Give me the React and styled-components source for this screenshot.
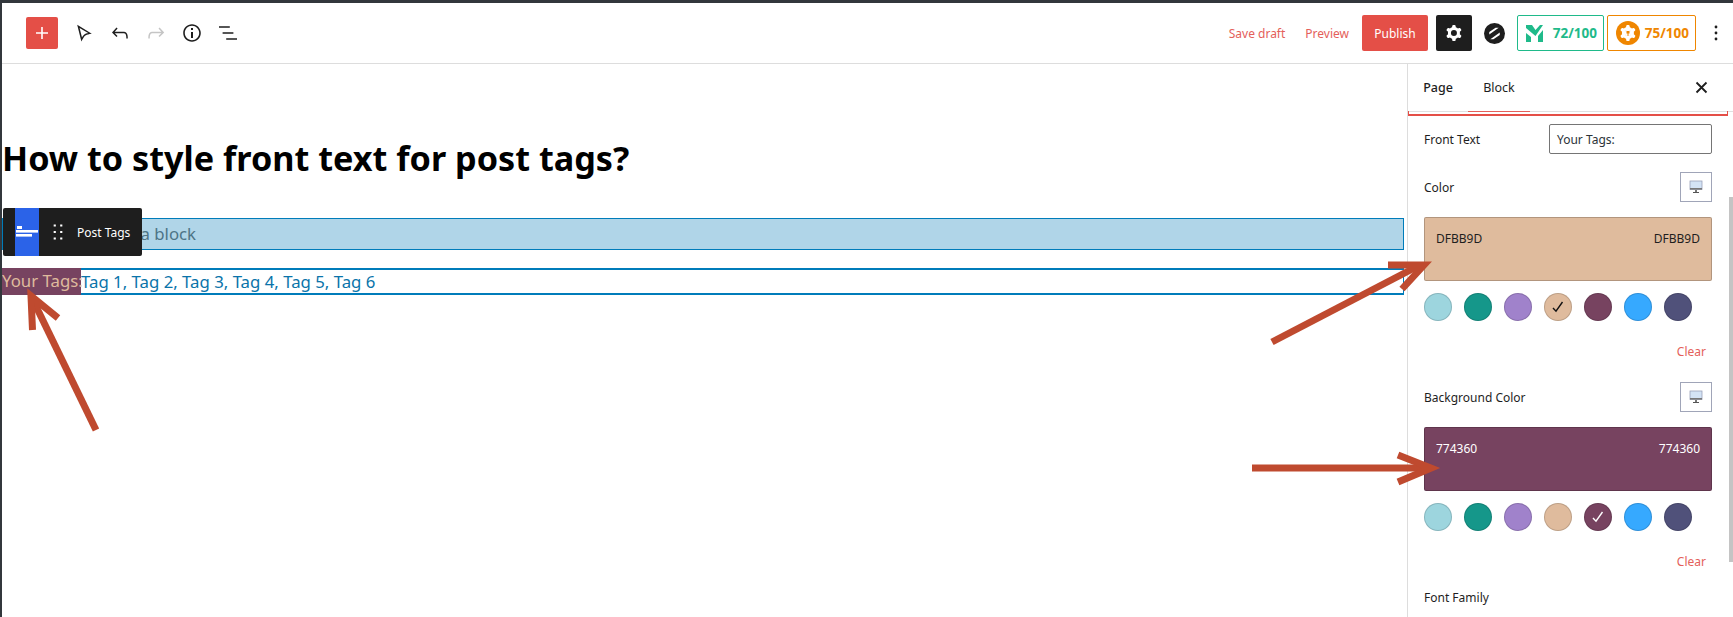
import React from "react";
import styled, { createGlobalStyle } from "styled-components";

const Global = createGlobalStyle`
  html, body { margin: 0; padding: 0; height: 617px; overflow: hidden; background: #fff; }
  * { box-sizing: border-box; }
  body { font-family: "Noto Sans", "Open Sans", sans-serif; color: #1e1e1e; }
`;

const Page = styled.div`
  position: relative;
  width: 1733px;
  height: 617px;
  border-top: 3px solid #32373c;
  border-left: 2px solid #32373c;
  overflow: hidden;
  display: flex;
  flex-direction: column;
`;
const Header = styled.header`
  flex: 0 0 61px;
  display: flex;
  align-items: center;
  padding: 0 0 0 24px;
  border-bottom: 1px solid #ddd;
`;
const AddButton = styled.button`
  width: 32px;
  height: 32px;
  padding: 0;
  border: 0;
  border-radius: 2px;
  background: #e44f47;
  color: #fff;
  display: flex;
  align-items: center;
  justify-content: center;
`;
const ToolGroup = styled.div`
  display: flex;
  align-items: center;
  gap: 12px;
  margin-left: 14px;
`;
const Icon = styled.svg`
  width: ${(p) => p.$size || 24}px;
  height: ${(p) => p.$size || 24}px;
  fill: ${(p) => p.$color || "currentColor"};
  flex: none;
  display: block;
`;
const HeaderRight = styled.div`
  margin-left: auto;
  display: flex;
  align-items: center;
`;
const LinkText = styled.span`
  font-size: 12px;
  color: #e4605a;
  margin-right: ${(p) => p.$gap}px;
`;
const Publish = styled.button`
  width: 66px;
  height: 36px;
  border: 0;
  border-radius: 2px;
  background: #e44f47;
  color: #fff;
  font: 12px "Noto Sans", sans-serif;
  padding: 0;
`;
const GearButton = styled.div`
  width: 36px;
  height: 36px;
  margin-left: 8px;
  border-radius: 2px;
  background: #1e1e1e;
  display: flex;
  align-items: center;
  justify-content: center;
  color: #fff;
`;
const LogoMark = styled.svg`
  width: 21px;
  height: 21px;
  margin: 0 12px 0 12px;
  display: block;
`;
const Score = styled.div`
  height: 36px;
  width: ${(p) => p.$w}px;
  margin-right: 3px;
  border: 1px solid ${(p) => p.$color};
  border-radius: 2px;
  color: ${(p) => p.$color};
  display: flex;
  align-items: center;
  justify-content: space-between;
  padding: 0 6px 0 8px;
  font-size: 13.5px;
  font-weight: 700;
`;
const Kebab = styled.div`
  width: 34px;
  display: flex;
  justify-content: center;
  color: #1e1e1e;
`;
const Main = styled.div`
  flex: 1;
  display: flex;
  min-height: 0;
`;
const Canvas = styled.main`
  flex: 1;
  min-width: 0;
  padding: 71px 3px 0 0;
`;
const Title = styled.h1`
  margin: 0;
  font-size: 34.2px;
  line-height: 46px;
  font-weight: 700;
  color: #000;
`;
const Placeholder = styled.div`
  margin-top: 37px;
  height: 32px;
  background: #b0d5e8;
  border: 1px solid #007cba;
  font-size: 16.8px;
  line-height: 29px;
  color: #4d7486;
  padding-left: 4px;
`;
const TagsBlock = styled.div`
  margin-top: 18px;
  height: 27px;
  border-top: 2px solid #007cba;
  border-bottom: 2px solid #007cba;
  border-right: 1px solid #007cba;
  display: flex;
  align-items: center;
  font-size: 16.8px;
  color: #0a74aa;
  white-space: nowrap;
`;
const FrontText = styled.span`
  background: #774360;
  color: #dfbb9d;
  height: 27px;
  margin: -2px 0;
  width: 79px;
  line-height: 25px;
  flex: none;
`;
const BlockToolbar = styled.div`
  position: absolute;
  left: 1px;
  top: 205px;
  width: 139px;
  height: 48px;
  background: #1e1e1e;
  border-radius: 2px;
  display: flex;
  align-items: center;
  color: #fff;
  padding-left: 12px;
`;
const BlockIcon = styled.div`
  width: 24px;
  height: 48px;
  background: #2b63e8;
  display: flex;
  align-items: center;
  justify-content: center;
`;
const Handle = styled.div`
  width: 38px;
  display: flex;
  justify-content: center;
`;
const BlockName = styled.span`
  font-size: 12px;
`;
const EdgeMark = styled.div`
  position: absolute;
  left: -2px;
  top: ${(p) => p.$top}px;
  width: 2px;
  height: ${(p) => p.$h}px;
  background: ${(p) => p.$color};
`;
const Sidebar = styled.aside`
  position: relative;
  width: 326px;
  flex: none;
  border-left: 1px solid #ddd;
  overflow: hidden;
`;
const Tabs = styled.div`
  height: 48px;
  display: flex;
  align-items: center;
  border-bottom: 1px solid #e0e0e0;
`;
const Tab = styled.div`
  height: 48px;
  width: ${(p) => p.$w}px;
  display: flex;
  align-items: center;
  justify-content: center;
  font-size: 12.5px;
  font-weight: ${(p) => (p.$active ? 500 : 400)};
  color: #1e1e1e;
  box-shadow: ${(p) => (p.$line ? "inset 0 -1px 0 #e4605a" : "none")};
`;
const CloseBox = styled.div`
  margin-left: auto;
  margin-right: 25px;
  display: flex;
`;
const RedRule = styled.div`
  height: 5px;
  margin-top: -1px;
  width: 320px;
  border: 2px solid #e44f47;
  border-top: 0;
  border-left-width: 1px;
  border-right-width: 1px;
`;
const Panel = styled.div`
  padding: 8px 21px 0 16px;
`;
const InputRow = styled.div`
  display: flex;
  align-items: center;
  justify-content: space-between;
  height: 30px;
`;
const Label = styled.span`
  font-size: 12px;
  color: #1e1e1e;
`;
const TextBox = styled.div`
  width: 163px;
  height: 30px;
  border: 1px solid #757575;
  border-radius: 2px;
  padding-left: 7px;
  font-size: 12px;
  line-height: 29px;
  color: #2c3338;
`;
const ColorHead = styled.div`
  display: flex;
  align-items: center;
  justify-content: space-between;
  height: 30px;
  margin-top: ${(p) => p.$mt}px;
`;
const DeviceButton = styled.div`
  width: 32px;
  height: 30px;
  border: 1px solid #a0a5b8;
  display: flex;
  align-items: center;
  justify-content: center;
`;
const Swatch = styled.div`
  margin-top: 15px;
  height: 64px;
  border-radius: 2px;
  background: ${(p) => p.$bg};
  border: 1px solid rgba(0, 0, 0, 0.2);
  color: ${(p) => p.$fg};
  font-size: 12px;
  display: flex;
  justify-content: space-between;
  padding: 12px 11px 0;
`;
const Circles = styled.div`
  display: flex;
  gap: 12px;
  margin-top: 12px;
`;
const Circle = styled.div`
  width: 28px;
  height: 28px;
  border-radius: 50%;
  background: ${(p) => p.$bg};
  border: 1px solid rgba(0, 0, 0, 0.15);
  display: flex;
  align-items: center;
  justify-content: center;
  color: ${(p) => p.$check};
`;
const ClearRow = styled.div`
  display: flex;
  justify-content: flex-end;
  padding-right: 6px;
  margin-top: 21px;
  height: 20px;
  line-height: 20px;
  font-size: 12px;
  color: #e4605a;
`;
const Foot = styled.div`
  margin-top: 14px;
  height: 20px;
  line-height: 20px;
`;
const ScrollThumb = styled.div`
  position: absolute;
  right: 0;
  top: 133px;
  width: 4px;
  height: 365px;
  background: #c4c4c4;
`;
const Overlay = styled.svg`
  position: absolute;
  left: -2px;
  top: -3px;
  width: 1733px;
  height: 617px;
  pointer-events: none;
`;

const P = {
  plus: "M18 11.2h-5.2V6h-1.6v5.2H6v1.6h5.2V18h1.6v-5.2H18z",
  pointer: "M9.4 20.5L5.2 3.8l14.6 9-2 .3c-.2 0-.4.1-.7.1-.9.2-1.6.3-2.2.5-.8.3-1.4.5-1.8 1-.4.3-.8.8-1.3 1.5-.4.5-.8 1.2-1.2 2l-.3.6-.9 1.7zM7.6 7.1l2.4 9.3c.2-.4.5-.8.7-1.1.6-.8 1.1-1.4 1.6-1.8.7-.6 1.5-1 2.5-1.3.4-.1.8-.2 1.3-.3l-8.5-4.8z",
  undo: "M18.3 11.7c-.6-.6-1.4-.9-2.3-.9H6.7l2.9-3.3-1.1-1-4.5 5L8.5 16l1-1-2.7-2.7H16c.5 0 .9.2 1.3.5 1 1 1 3.4 1 4.5v.3h1.5v-.2c0-1.5 0-4.3-1.5-5.7z",
  redo: "M15.6 6.5l-1.1 1 2.9 3.3H8c-.9 0-1.7.3-2.3.9-1.4 1.5-1.4 4.2-1.4 5.6v.2h1.5v-.3c0-1.1 0-3.5 1-4.5.3-.3.7-.5 1.3-.5h9.2L14.5 15l1.1 1.1 4.6-4.6-4.6-5z",
  info: "M12 3.2c-4.8 0-8.8 3.9-8.8 8.8 0 4.8 3.9 8.8 8.8 8.8 4.8 0 8.8-3.9 8.8-8.8 0-4.8-4-8.8-8.8-8.8zm0 16c-4 0-7.2-3.3-7.2-7.2C4.8 8 8 4.8 12 4.8s7.2 3.3 7.2 7.2c0 4-3.2 7.2-7.2 7.2zM11 17h2v-6h-2v6zm0-8h2V7h-2v2z",
  list: "M13.8 5.2H3v1.5h10.8V5.2zm-3.6 12v1.5H21v-1.5H10.2zm7.2-6H6.6v1.5h10.8v-1.5z",
  drag: "M8 7h2V5H8v2zm0 6h2v-2H8v2zm0 6h2v-2H8v2zm6-14v2h2V5h-2zm0 8h2v-2h-2v2zm0 6h2v-2h-2v2z",
  cog: "M10.289 4.836A1 1 0 0111.275 4h1.306a1 1 0 01.987.836l.244 1.466c.787.26 1.503.679 2.108 1.218l1.393-.522a1 1 0 011.216.437l.653 1.13a1 1 0 01-.23 1.273l-1.148.944a6.025 6.025 0 010 2.435l1.149.946a1 1 0 01.23 1.272l-.653 1.13a1 1 0 01-1.216.437l-1.394-.522c-.605.54-1.32.958-2.108 1.218l-.244 1.466a1 1 0 01-.987.836h-1.306a1 1 0 01-.986-.836l-.244-1.466a5.995 5.995 0 01-2.108-1.218l-1.394.522a1 1 0 01-1.217-.436l-.653-1.131a1 1 0 01.23-1.272l1.149-.946a6.026 6.026 0 010-2.435l-1.148-.944a1 1 0 01-.23-1.272l.653-1.131a1 1 0 011.217-.437l1.393.522a5.994 5.994 0 012.108-1.218l.244-1.466zM14.929 12a3 3 0 11-6 0 3 3 0 016 0z",
};

const Glyph = ({ d, size, color }) => (
  <Icon viewBox="0 0 24 24" $size={size} $color={color}>
    <path d={d} fillRule="evenodd" />
  </Icon>
);

const Device = () => (
  <svg width="14" height="14" viewBox="0 0 14 14">
    <rect x="1" y="1" width="12" height="8.5" fill="#d3e3f5" stroke="#9aa0b8" strokeWidth="0.8" />
    <rect x="1" y="8" width="12" height="1.6" fill="#777" />
    <rect x="6" y="10" width="2" height="2" fill="#777" />
    <rect x="4" y="12" width="6" height="1" fill="#555" />
  </svg>
);

const Check = () => (
  <svg width="14" height="14" viewBox="0 0 14 14" fill="none" stroke="currentColor" strokeWidth="1.4">
    <path d="M2 8l3 3.2L11.5 2" />
  </svg>
);

const palette = ["#9dd5de", "#15978a", "#a082cb", "#dfbb9d", "#774360", "#36a9ff", "#50517a"];

const ColorField = ({ label, value, fg, selected, checkColor, mt }) => (
  <>
    <ColorHead $mt={mt}>
      <Label>{label}</Label>
      <DeviceButton><Device /></DeviceButton>
    </ColorHead>
    <Swatch $bg={`#${value}`} $fg={fg}>
      <span>{value}</span>
      <span>{value}</span>
    </Swatch>
    <Circles>
      {palette.map((c, i) => (
        <Circle key={c} $bg={c} $check={checkColor}>
          {i === selected && <Check />}
        </Circle>
      ))}
    </Circles>
    <ClearRow>Clear</ClearRow>
  </>
);

const Arrow = ({ shaft, head }) => (
  <g fill="none" stroke="#bf4a2f" strokeWidth="7">
    <path d={shaft} />
    <path d={head} />
  </g>
);

export default function App() {
  return (
    <Page>
      <Global />
      <Header>
        <AddButton><Glyph d={P.plus} /></AddButton>
        <ToolGroup>
          <Glyph d={P.pointer} />
          <Glyph d={P.undo} />
          <Glyph d={P.redo} color="#c5c5c5" />
          <Glyph d={P.info} />
          <Glyph d={P.list} />
        </ToolGroup>
        <HeaderRight>
          <LinkText $gap={20}>Save draft</LinkText>
          <LinkText $gap={13}>Preview</LinkText>
          <Publish>Publish</Publish>
          <GearButton><Glyph d={P.cog} /></GearButton>
          <LogoMark viewBox="0 0 20 20">
            <circle cx="10" cy="10" r="10" fill="#1e1e1e" />
            <path d="M5 8.5L11 4.5H14L5 11zM15 11.5L9 15.5H6L15 9z" fill="#fff" />
          </LogoMark>
          <Score $w={87} $color="#1fba8a">
            <svg width="19" height="20" viewBox="0 0 19 20">
              <path d="M0 2h6l3.5 5L14 2h3L9.5 13 0 5zM0 10l5 4v5H0zM12 13l5-6v12h-5z" fill="#1fba8a" />
            </svg>
            <span>72/100</span>
          </Score>
          <Score $w={89} $color="#ef8600">
            <svg width="24" height="24" viewBox="0 0 24 24">
              <circle cx="12" cy="12" r="12" fill="#ef8600" />
              <path d={P.cog} fill="#fff" fillRule="evenodd" />
              <circle cx="12" cy="12" r="3.2" fill="#fff" />
              <path d="M10.5 10v2.5h3V10zM11.5 12.5h1V15h-1z" fill="#ef8600" />
            </svg>
            <span>75/100</span>
          </Score>
          <Kebab>
            <Icon viewBox="0 0 4 16" $size={16}>
              <circle cx="2" cy="2" r="1.4" />
              <circle cx="2" cy="8" r="1.4" />
              <circle cx="2" cy="14" r="1.4" />
            </Icon>
          </Kebab>
        </HeaderRight>
      </Header>
      <Main>
        <Canvas>
          <Title>How to style front text for post tags?</Title>
          <Placeholder>Type / to choose a block</Placeholder>
          <TagsBlock>
            <FrontText>Your Tags:</FrontText>
            <span>Tag 1, Tag 2, Tag 3, Tag 4, Tag 5, Tag 6</span>
          </TagsBlock>
        </Canvas>
        <Sidebar>
          <Tabs>
            <Tab $w={60} $active>Page</Tab>
            <Tab $w={62} $line>Block</Tab>
            <CloseBox>
              <svg width="13" height="13" viewBox="0 0 13 13" stroke="#1e1e1e" strokeWidth="1.8">
                <path d="M1.5 1.5l10 10M11.5 1.5l-10 10" />
              </svg>
            </CloseBox>
          </Tabs>
          <RedRule />
          <Panel>
            <InputRow>
              <Label>Front Text</Label>
              <TextBox>Your Tags:</TextBox>
            </InputRow>
            <ColorField label="Color" value="DFBB9D" fg="#1e1e1e" selected={3} checkColor="#111" mt={18} />
            <ColorField label="Background Color" value="774360" fg="#fff" selected={4} checkColor="#fff" mt={20} />
            <Foot><Label>Font Family</Label></Foot>
          </Panel>
          <ScrollThumb />
        </Sidebar>
      </Main>
      <EdgeMark $top={194} $h={9} $color="#e44f47" />
      <BlockToolbar>
        <BlockIcon>
          <svg width="24" height="24" viewBox="0 0 24 24" fill="#fff">
            <rect x="2" y="6" width="5" height="3" />
            <rect x="1" y="10" width="22" height="2.6" />
            <rect x="1" y="14" width="16" height="2.6" />
          </svg>
        </BlockIcon>
        <Handle><Glyph d={P.drag} size={26} /></Handle>
        <BlockName>Post Tags</BlockName>
      </BlockToolbar>
      <Overlay viewBox="0 0 1733 617">
        <Arrow shaft="M96 430L32 298" head="M32.5 330L31 296L58 318" />
        <Arrow shaft="M1272 342L1420 265" head="M1388 265H1424L1402 289" />
        <Arrow shaft="M1252 468H1428" head="M1398 455L1431 468L1398 482" />
      </Overlay>
    </Page>
  );
}
